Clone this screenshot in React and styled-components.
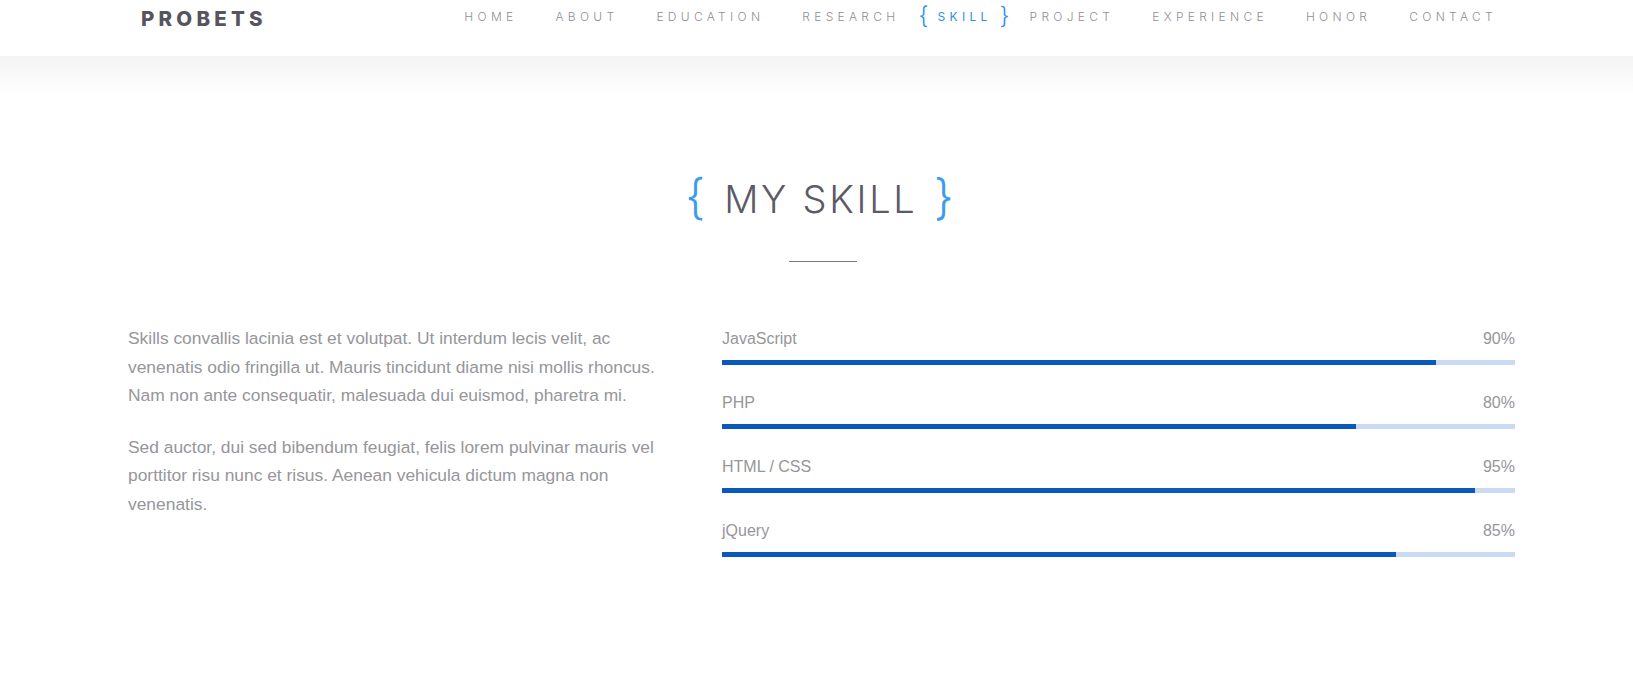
import styled, { createGlobalStyle } from "styled-components";

const GlobalStyle = createGlobalStyle`
  html, body {
    margin: 0;
    padding: 0;
    background: #fff;
  }
  body {
    font-family: "Inter", "Liberation Sans", sans-serif;
  }
`;

const navItems = ["Home", "About", "Education", "Research", "Skill", "Project", "Experience", "Honor", "Contact"];

const skills = [
  { name: "JavaScript", value: 90 },
  { name: "PHP", value: 80 },
  { name: "HTML / CSS", value: 95 },
  { name: "jQuery", value: 85 },
];

function App() {
  return (
    <Page>
      <GlobalStyle />
      <Header>
        <HeaderInner>
          <Logo>PROBETS</Logo>
          <Nav>
            {navItems.map((item) => (
              <NavItem key={item} $active={item === "Skill"}>
                {item}
              </NavItem>
            ))}
          </Nav>
        </HeaderInner>
      </Header>

      <Section>
        <Title>
          <Brace>{"{"}</Brace>
          <TitleText>MY SKILL</TitleText>
          <Brace>{"}"}</Brace>
        </Title>
        <Divider />

        <Content>
          <Intro>
            <p>
              Skills convallis lacinia est et volutpat. Ut interdum lecis velit, ac venenatis odio
              fringilla ut. Mauris tincidunt diame nisi mollis rhoncus. Nam non ante consequatir,
              malesuada dui euismod, pharetra mi.
            </p>
            <p>
              Sed auctor, dui sed bibendum feugiat, felis lorem pulvinar mauris vel porttitor risu
              nunc et risus. Aenean vehicula dictum magna non venenatis.
            </p>
          </Intro>

          <SkillList>
            {skills.map((s) => (
              <SkillRow key={s.name}>
                <SkillHead>
                  <span>{s.name}</span>
                  <span>{s.value}%</span>
                </SkillHead>
                <Track>
                  <Fill style={{ width: `${s.value}%` }} />
                </Track>
              </SkillRow>
            ))}
          </SkillList>
        </Content>
      </Section>
    </Page>
  );
}

const Page = styled.div`
  min-height: 688px;
  background: #fff;
`;

const Header = styled.header`
  position: relative;
  height: 56px;
  background: #fff;

  &::after {
    content: "";
    position: absolute;
    left: 0;
    right: 0;
    top: 56px;
    height: 40px;
    background: linear-gradient(to bottom, #f4f4f4, rgba(255, 255, 255, 0));
  }
`;

const HeaderInner = styled.div`
  display: flex;
  align-items: center;
  justify-content: space-between;
  height: 34px;
  padding: 0 117px 0 141px;
`;

const Logo = styled.div`
  font-family: "Inter", "Liberation Sans", sans-serif;
  font-weight: 800;
  font-size: 20.5px;
  letter-spacing: 4.2px;
  color: #55545f;
  padding-top: 2px;
`;

const Nav = styled.nav`
  display: flex;
  align-items: center;
`;

const NavItem = styled.a`
  position: relative;
  padding: 0 19px;
  font-family: "Inter", "Liberation Sans", sans-serif;
  font-size: 12px;
  letter-spacing: 4.3px;
  text-transform: uppercase;
  color: ${(p) => (p.$active ? "#2a90ee" : "#8f8f96")};
  font-weight: ${(p) => (p.$active ? 400 : 300)};
  line-height: 34px;

  ${(p) =>
    p.$active &&
    `
    &::before, &::after {
      position: absolute;
      top: -1px;
      font-size: 24px;
      font-weight: 300;
      line-height: 34px;
      letter-spacing: 0;
      color: #2a90ee;
    }
    &::before { content: "{"; left: 0; }
    &::after { content: "}"; right: 1px; }
  `}
`;

const Section = styled.section`
  padding: 115px 0 80px;
`;

const Title = styled.h2`
  display: flex;
  align-items: center;
  justify-content: center;
  gap: 19px;
  margin: 0;
  height: 56px;
  padding-left: 6px;
`;

const Brace = styled.span`
  font-family: "Inter", "Liberation Sans", sans-serif;
  font-weight: 300;
  font-size: 48px;
  line-height: 56px;
  color: #3a9cf0;
  margin-top: -5px;
`;

const TitleText = styled.span`
  font-family: "Inter", "Liberation Sans", sans-serif;
  font-weight: 300;
  font-size: 38px;
  letter-spacing: 2.7px;
  color: #5b5a66;
  margin-right: -2.7px;
`;

const Divider = styled.div`
  width: 68px;
  height: 1px;
  background: #7a7a80;
  margin: 34px auto 0;
  transform: translateX(6px);
`;

const Content = styled.div`
  display: grid;
  grid-template-columns: 540px 1fr;
  column-gap: 54px;
  width: 1387px;
  margin: 62px auto 0;
  transform: translateX(5px);
`;

const Intro = styled.div`
  font-family: "Liberation Sans Narrow", "Liberation Sans", sans-serif;
  font-size: 17.4px;
  line-height: 28.5px;
  color: #96969b;

  p {
    margin: 0 0 23px;
  }
`;

const SkillList = styled.div`
  display: flex;
  flex-direction: column;
  gap: 26px;
  padding-top: 3px;
`;

const SkillRow = styled.div`
  display: flex;
  flex-direction: column;
  gap: 9px;
`;

const SkillHead = styled.div`
  display: flex;
  justify-content: space-between;
  font-family: "Liberation Sans Narrow", "Liberation Sans", sans-serif;
  font-size: 16px;
  line-height: 24px;
  color: #96969b;
`;

const Track = styled.div`
  height: 5px;
  background: #c8dbf3;
`;

const Fill = styled.div`
  height: 100%;
  background: #0b57c0;
`;

export default App;
